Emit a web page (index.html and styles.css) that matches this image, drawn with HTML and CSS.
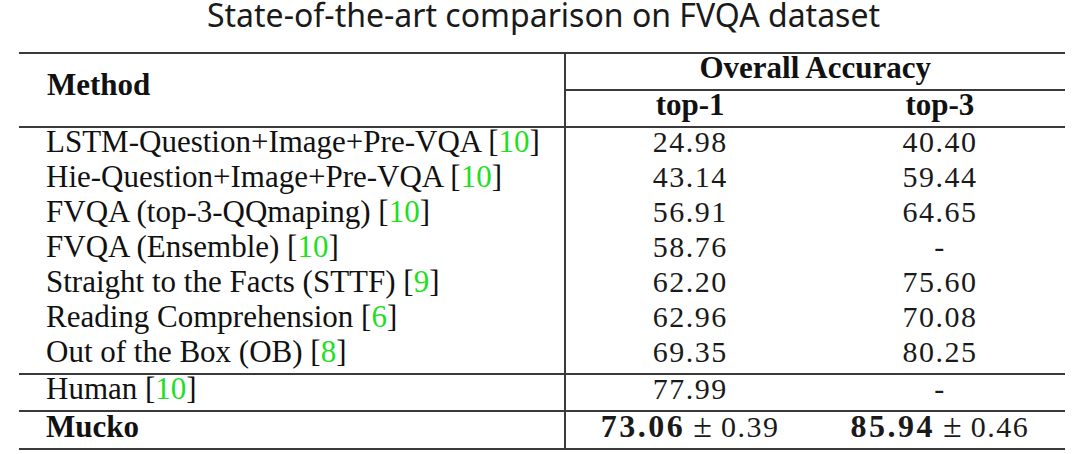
FILE: index.html
```html
<!DOCTYPE html>
<html lang="en">
<head>
    <meta charset="UTF-8">
    <meta name="viewport" content="width=device-width, initial-scale=1.0">
    <title>State-of-the-art comparison on FVQA dataset</title>
    <link rel="stylesheet" href="styles.css">
</head>
<body>
    <h1 class="title">State-of-the-art comparison on FVQA dataset</h1>

    <table class="results">
        <colgroup>
            <col class="col-method">
            <col class="col-score">
            <col class="col-score">
        </colgroup>
        <thead>
            <tr class="head-top">
                <th class="method" rowspan="2">Method</th>
                <th class="group" colspan="2">Overall Accuracy</th>
            </tr>
            <tr class="head-sub">
                <th class="sub">top-1</th>
                <th class="sub">top-3</th>
            </tr>
        </thead>
        <tbody class="baselines">
            <tr>
                <td class="name">LSTM-Question+Image+Pre-VQA [<span class="cite">10</span>]</td>
                <td class="num">24.98</td>
                <td class="num">40.40</td>
            </tr>
            <tr>
                <td class="name">Hie-Question+Image+Pre-VQA [<span class="cite">10</span>]</td>
                <td class="num">43.14</td>
                <td class="num">59.44</td>
            </tr>
            <tr>
                <td class="name">FVQA (top-3-QQmaping) [<span class="cite">10</span>]</td>
                <td class="num">56.91</td>
                <td class="num">64.65</td>
            </tr>
            <tr>
                <td class="name">FVQA (Ensemble) [<span class="cite">10</span>]</td>
                <td class="num">58.76</td>
                <td class="num">-</td>
            </tr>
            <tr>
                <td class="name">Straight to the Facts (STTF) [<span class="cite">9</span>]</td>
                <td class="num">62.20</td>
                <td class="num">75.60</td>
            </tr>
            <tr>
                <td class="name">Reading Comprehension [<span class="cite">6</span>]</td>
                <td class="num">62.96</td>
                <td class="num">70.08</td>
            </tr>
            <tr>
                <td class="name">Out of the Box (OB) [<span class="cite">8</span>]</td>
                <td class="num">69.35</td>
                <td class="num">80.25</td>
            </tr>
        </tbody>
        <tbody class="human">
            <tr>
                <td class="name">Human [<span class="cite">10</span>]</td>
                <td class="num">77.99</td>
                <td class="num">-</td>
            </tr>
        </tbody>
        <tbody class="ours">
            <tr>
                <td class="name"><strong>Mucko</strong></td>
                <td class="num"><b>73.06</b><span class="pm">&plusmn;</span>0.39</td>
                <td class="num"><b>85.94</b><span class="pm">&plusmn;</span>0.46</td>
            </tr>
        </tbody>
    </table>
</body>
</html>
```

FILE: styles.css
```css
:root {
    --rule-color: #3a3a3a;
    --text-color: #111;
    --cite-color: #1ee01e;
}

* {
    box-sizing: border-box;
    margin: 0;
    padding: 0;
}

body {
    background-color: #fff;
    color: var(--text-color);
    font-family: 'Liberation Serif', 'Times New Roman', serif;
}

.title {
    height: 52px;
    padding-left: 7px;
    text-align: center;
    font-family: 'Noto Sans', 'Open Sans', sans-serif;
    font-size: 32px;
    font-weight: normal;
    line-height: 30px;
    color: #1a1a1a;
}

.results {
    width: 1046px;
    margin-left: 19px;
    border-collapse: collapse;
    border-top: 2px solid var(--rule-color);
    border-bottom: 2px solid var(--rule-color);
    font-size: 31px;
}

.col-method {
    width: 545px;
}

.col-score {
    width: 250px;
}

.results th,
.results td {
    height: 35px;
    line-height: 27px;
    padding-bottom: 8px;
    white-space: nowrap;
}

.results th {
    font-weight: bold;
}

.results .method {
    text-align: left;
    padding-left: 28px;
    padding-bottom: 11px;
    border-right: 2px solid var(--rule-color);
}

.results .group {
    text-align: center;
    border-bottom: 2px solid var(--rule-color);
}

.head-sub {
    border-bottom: 2px solid var(--rule-color);
}

.results .name {
    padding-left: 27px;
    text-align: left;
    border-right: 2px solid var(--rule-color);
}

.results .num {
    text-align: center;
    font-size: 30px;
    letter-spacing: 1.5px;
    color: #1a1a1a;
}

.num b {
    font-size: 32px;
    letter-spacing: 2.5px;
}

.pm {
    margin: 0 9px 0 8px;
    font-size: 34px;
    letter-spacing: 0;
}

.cite {
    color: var(--cite-color);
}

.human,
.ours {
    border-top: 2px solid var(--rule-color);
}
```
